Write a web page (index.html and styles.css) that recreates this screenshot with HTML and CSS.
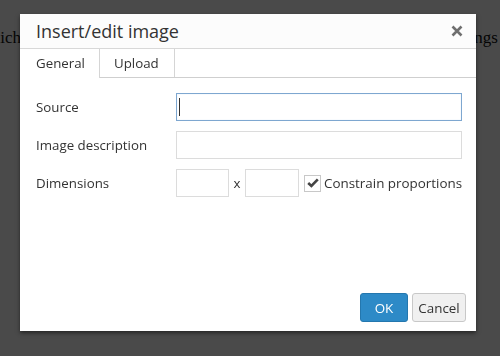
FILE: index.html
```html
<!DOCTYPE html>
<html>
<head>
<meta charset="utf-8">
<link rel="stylesheet" href="styles.css">
</head>
<body>
<div class="page">
  <div class="page-line">
    <span class="lead"><span>which</span></span>
    <span class="tail">settings</span>
  </div>
</div>
<div class="overlay"></div>
<div class="dialog">
  <div class="head">
    <div class="title">Insert/edit image</div>
    <button class="close" aria-label="Close">
      <svg width="12" height="12" viewBox="0 0 12 12"><path d="M1.5 1.5 L10.5 10.5 M10.5 1.5 L1.5 10.5" stroke="#6f6f6f" stroke-width="2.6" stroke-linecap="butt"/></svg>
    </button>
  </div>
  <div class="tabs">
    <div class="tab active">General</div>
    <div class="tab">Upload</div>
  </div>
  <div class="body">
    <div class="row">
      <label class="label">Source</label>
      <div class="field focused"><input class="input" type="text"><span class="caret"></span></div>
    </div>
    <div class="row">
      <label class="label">Image description</label>
      <div class="field"><input class="input" type="text"></div>
    </div>
    <div class="row">
      <label class="label">Dimensions</label>
      <div class="dims">
        <input class="input small w1" type="text">
        <span class="times">x</span>
        <input class="input small w2" type="text">
        <span class="check">
          <svg width="12" height="10" viewBox="0 0 12 10"><path d="M1.2 5 L4.4 8 L10.8 1.4" fill="none" stroke="#444" stroke-width="2.6"/></svg>
        </span>
        <span class="check-label">Constrain proportions</span>
      </div>
    </div>
  </div>
  <div class="foot">
    <button class="btn primary">OK</button>
    <button class="btn secondary">Cancel</button>
  </div>
</div>
</body>
</html>
```
FILE: styles.css
```css
html, body {
  margin: 0;
  padding: 0;
  width: 500px;
  height: 356px;
  overflow: hidden;
  background: #fff;
}
.page {
  padding-top: 27px;
  font-family: "Liberation Serif", serif;
  font-size: 17px;
  line-height: 22px;
  color: #111;
}
.page-line {
  display: flex;
}
.lead {
  display: flex;
  justify-content: flex-end;
  width: 21px;
  white-space: nowrap;
}
.tail {
  margin-left: 425px;
  white-space: nowrap;
}
.overlay {
  position: fixed;
  inset: 0;
  background: rgba(0, 0, 0, 0.71);
}
.dialog {
  position: absolute;
  left: 20px;
  top: 14px;
  width: 456px;
  height: 317px;
  background: #fff;
  box-shadow: 0 2px 4px rgba(0, 0, 0, 0.5);
  display: flex;
  flex-direction: column;
  font-family: "Open Sans", sans-serif;
  color: #333;
}
.head {
  height: 34px;
  border-bottom: 1px solid #d8d8d8;
  background: #fcfcfc;
  display: flex;
  align-items: center;
  justify-content: space-between;
  padding: 0 13px 0 16px;
}
.title {
  font-size: 18px;
  line-height: 24px;
  color: #333;
}
.close {
  border: 0;
  background: none;
  padding: 0;
  width: 12px;
  height: 12px;
  display: flex;
}
.tabs {
  display: flex;
  height: 28px;
  border-bottom: 1px solid #cfcfcf;
}
.tab {
  box-sizing: border-box;
  padding: 0 0 0 15px;
  font-size: 13.3px;
  line-height: 28px;
  border-right: 1px solid #d5d5d5;
  background: #fff;
  color: #333;
}
.tab.active {
  height: 29px;
  width: 80px;
  padding-left: 16px;
}
.tab:not(.active) {
  width: 75px;
  padding-left: 14px;
}
.body {
  flex: 1;
  padding: 15px 14px 0 15px;
  display: flex;
  flex-direction: column;
  gap: 10px;
}
.row {
  display: grid;
  grid-template-columns: 141px 1fr;
  align-items: center;
  height: 28px;
}
.label {
  font-size: 13.3px;
  color: #333;
  padding-left: 1px;
}
.field {
  position: relative;
  display: flex;
}
.input {
  box-sizing: border-box;
  height: 28px;
  width: 100%;
  border: 1px solid #dcdcdc;
  background: #fff;
  margin: 0;
  padding: 0 4px;
  font-family: "Open Sans", sans-serif;
  font-size: 13.3px;
  outline: none;
}
.focused .input {
  border-color: #7ea7d0;
  box-shadow: inset 0 0 1px rgba(89, 165, 229, 0.4);
}
.caret {
  position: absolute;
  left: 3px;
  top: 5px;
  width: 1px;
  height: 18px;
  background: #333;
}
.dims {
  display: flex;
  align-items: center;
}
.small {
  width: 53px;
}
.small.w2 {
  width: 54px;
}
.times {
  font-size: 13.3px;
  width: 16px;
  text-align: center;
  color: #333;
}
.check {
  box-sizing: border-box;
  width: 17px;
  height: 17px;
  border: 1px solid #c8c8c8;
  background: #fff;
  margin-left: 5px;
  display: flex;
  align-items: center;
  justify-content: center;
}
.check-label {
  margin-left: 3px;
  font-size: 13.4px;
  color: #333;
  white-space: nowrap;
}
.foot {
  display: flex;
  justify-content: flex-end;
  gap: 4px;
  padding: 0 10px 9px 0;
}
.btn {
  box-sizing: border-box;
  height: 29px;
  padding: 0;
  font-family: "Open Sans", sans-serif;
  font-size: 13.4px;
  color: #333;
  background: #f0f0f0;
  border: 1px solid #c8c8c8;
  border-radius: 3px;
}
.btn.secondary {
  width: 54px;
}
.btn.primary {
  width: 48px;
  background: #2d8ac7;
  border-color: #2477ae;
  color: #fff;
}
```
